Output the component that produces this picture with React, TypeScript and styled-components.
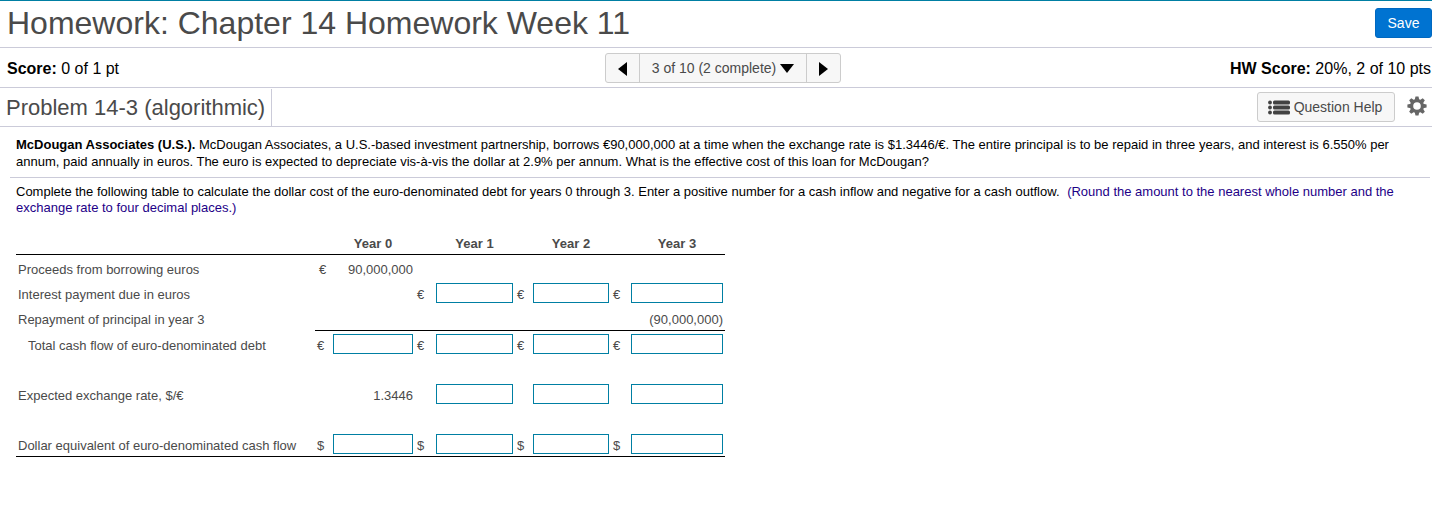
import React from "react";
import styled, { createGlobalStyle } from "styled-components";

const GlobalStyle = createGlobalStyle`
  * { box-sizing: border-box; }
  body {
    margin: 0;
    background: #fff;
    color: #000;
    font-family: "Liberation Sans", Arial, Helvetica, sans-serif;
    font-size: 13px;
  }
  button, input { font-family: inherit; }
`;

const line = "#cbcbd9";
const teal = "#007fa3";
const gray = "#4a4a4a";

const Header = styled.header`
  display: flex;
  align-items: center;
  justify-content: space-between;
  height: 48px;
  padding: 0 0 2px 7px;
  border-top: 1px solid ${teal};
  border-bottom: 1px solid ${line};
`;

const Title = styled.h1`
  margin: 0;
  font-size: 32px;
  line-height: 42px;
  font-weight: 400;
  color: ${gray};
  white-space: nowrap;
`;

const SaveButton = styled.button`
  width: 57px;
  height: 30px;
  padding: 0;
  border: 1px solid #0068c0;
  border-radius: 3px;
  background: #0073d1;
  color: #fff;
  font-size: 14px;
`;

const ScoreBar = styled.div`
  display: grid;
  grid-template-columns: 1fr auto 1fr;
  align-items: center;
  height: 40px;
  border-bottom: 1px solid ${line};
  font-size: 16px;
  white-space: nowrap;
`;

const Score = styled.div<{ $end?: boolean }>`
  padding: 2px 1px 0 7px;
  text-align: ${(p) => (p.$end ? "right" : "left")};
`;

const Pager = styled.nav`
  display: flex;
  height: 30px;
  margin-left: 14px;
  border: 1px solid #ccc;
  border-radius: 3px;
  background: #f7f7f7;
`;

const PagerButton = styled.button<{ $wide?: boolean }>`
  display: flex;
  align-items: center;
  justify-content: center;
  gap: 4px;
  width: ${(p) => (p.$wide ? 168 : 33)}px;
  padding: 0;
  border: solid #ccc;
  border-width: ${(p) => (p.$wide ? "0 1px" : "0")};
  background: transparent;
  color: ${gray};
  font-size: 14px;

  svg {
    margin-top: 2px;
  }
`;

const ProblemBar = styled.div`
  display: flex;
  align-items: center;
  justify-content: space-between;
  height: 39px;
  border-bottom: 1px solid ${line};
`;

const ProblemTitle = styled.h2`
  margin: 0;
  padding: 1px 6px 0 6px;
  border-right: 1px solid ${line};
  font-size: 22px;
  line-height: 36px;
  font-weight: 400;
  color: ${gray};
  white-space: nowrap;
`;

const Tools = styled.div`
  display: flex;
  align-items: center;
  gap: 12px;
  padding-right: 5px;
`;

const HelpButton = styled.button`
  display: flex;
  align-items: center;
  justify-content: center;
  gap: 4px;
  width: 138px;
  height: 30px;
  padding: 0 2px 0 0;
  border: 1px solid #ccc;
  border-radius: 3px;
  background: #f7f7f7;
  color: ${gray};
  font-size: 14px;
`;

const IconButton = styled.button`
  display: flex;
  padding: 0 0 2px;
  border: 0;
  background: transparent;
`;

const Problem = styled.main`
  padding: 9px 2px 0 10px;
`;

const Statement = styled.p`
  margin: 0;
  padding: 0 6px 7px;
  border-bottom: 1px solid ${line};
  line-height: 17px;
`;

const Instruction = styled.p`
  margin: 0;
  padding: 6px 6px 0;
  line-height: 16px;
`;

const Hint = styled.span`
  margin-left: 4px;
  color: #1d0087;
`;

const Worksheet = styled.table`
  width: 709px;
  margin: 16px 0 0 6px;
  table-layout: fixed;
  border-collapse: separate;
  border-spacing: 0;
  color: ${gray};
`;

const Col = styled.col<{ $w: number }>`
  width: ${(p) => p.$w}px;
`;

const HeadCell = styled.th`
  height: 23px;
  padding: 0;
  border-bottom: 1px solid #000;
  font-weight: 700;
`;

const Row = styled.tr<{ $rule?: "all" | "values" }>`
  height: ${(p) => (p.$rule ? 26 : 25)}px;

  > * {
    line-height: 20px;
    border-bottom: ${(p) => (p.$rule ? "1px solid #000" : "0")};
  }

  > th {
    border-bottom: ${(p) => (p.$rule === "all" ? "1px solid #000" : "0")};
  }
`;

const Gap = styled.tr`
  height: 25px;
`;

const Label = styled.th<{ $indent?: boolean }>`
  padding: 4px 2px 0 ${(p) => (p.$indent ? 12 : 2)}px;
  font-weight: 400;
  text-align: left;
  white-space: nowrap;
`;

const Currency = styled.td<{ $inset?: boolean }>`
  padding: 4px 0 0 ${(p) => (p.$inset ? 4 : 2)}px;
`;

const Amount = styled.td`
  padding: 4px 2px 0;
  text-align: right;
  white-space: nowrap;
`;

const AnswerCell = styled.td`
  padding: 0 2px;
`;

const Answer = styled.input`
  display: block;
  width: 100%;
  height: 20px;
  margin-top: 1px;
  padding: 0 3px;
  border: 1px solid ${teal};
  border-radius: 0;
  background: #fff;
  font-size: 13px;
  text-align: right;
`;

type Entry = { cur?: string; text?: string; input?: boolean };
type Line = { label: string; indent?: boolean; rule?: "all" | "values"; gap?: boolean; cells: Entry[] };

const ask = (cur?: string): Entry => ({ cur, input: true });

const lines: Line[] = [
  { label: "Proceeds from borrowing euros", cells: [{ cur: "€", text: "90,000,000" }, {}, {}, {}] },
  { label: "Interest payment due in euros", cells: [{}, ask("€"), ask("€"), ask("€")] },
  { label: "Repayment of principal in year 3", rule: "values", cells: [{}, {}, {}, { text: "(90,000,000)" }] },
  { label: "Total cash flow of euro-denominated debt", indent: true, cells: [ask("€"), ask("€"), ask("€"), ask("€")] },
  { label: "Expected exchange rate, $/€", gap: true, cells: [{ text: "1.3446" }, ask(), ask(), ask()] },
  {
    label: "Dollar equivalent of euro-denominated cash flow",
    gap: true,
    rule: "all",
    cells: [ask("$"), ask("$"), ask("$"), ask("$")],
  },
];

const columns = [299, 16, 84, 19, 81, 16, 80, 18, 96];

const Triangle = ({ d, w, h }: { d: string; w: number; h: number }) => (
  <svg width={w} height={h} viewBox={`0 0 ${w} ${h}`} aria-hidden="true">
    <path d={d} fill="#000" />
  </svg>
);

const ListIcon = () => (
  <svg width="22" height="15" viewBox="0 0 22 15" fill="#424242" aria-hidden="true">
    {[0, 5, 10].map((y) => (
      <g key={y}>
        <circle cx="2" cy={y + 2.5} r="1.9" />
        <rect x="5" y={y + 0.5} width="17" height="4" rx="1.5" />
      </g>
    ))}
  </svg>
);

const GearIcon = () => (
  <svg width="20" height="20" viewBox="-10 -10 20 20" aria-hidden="true">
    <g fill="#666">
      {[0, 45, 90, 135, 180, 225, 270, 315].map((a) => (
        <path key={a} d="M-2.3 -6L-1.5 -9.6H1.5L2.3 -6Z" transform={`rotate(${a})`} />
      ))}
    </g>
    <circle r="5.4" fill="none" stroke="#666" strokeWidth="3.2" />
  </svg>
);

export default function App() {
  return (
    <>
      <GlobalStyle />
      <Header>
        <Title>Homework: Chapter 14 Homework Week 11</Title>
        <SaveButton type="button">Save</SaveButton>
      </Header>
      <ScoreBar>
        <Score>
          <b>Score:</b> 0 of 1 pt
        </Score>
        <Pager aria-label="Questions">
          <PagerButton type="button" aria-label="Previous question">
            <Triangle w={9} h={14} d="M9 0V14L0 7Z" />
          </PagerButton>
          <PagerButton type="button" $wide>
            3 of 10 (2 complete)
            <Triangle w={14} h={9} d="M0 0H14L7 9Z" />
          </PagerButton>
          <PagerButton type="button" aria-label="Next question">
            <Triangle w={9} h={14} d="M0 0V14L9 7Z" />
          </PagerButton>
        </Pager>
        <Score $end>
          <b>HW Score:</b> 20%, 2 of 10 pts
        </Score>
      </ScoreBar>
      <ProblemBar>
        <ProblemTitle>Problem 14-3 (algorithmic)</ProblemTitle>
        <Tools>
          <HelpButton type="button">
            <ListIcon />
            Question Help
          </HelpButton>
          <IconButton type="button" aria-label="Settings">
            <GearIcon />
          </IconButton>
        </Tools>
      </ProblemBar>
      <Problem>
        <Statement>
          <b>McDougan Associates (U.S.).</b> McDougan Associates, a U.S.-based investment partnership, borrows
          €90,000,000 at a time when the exchange rate is $1.3446/€. The entire principal is to be repaid in three
          years, and interest is 6.550% per annum, paid annually in euros. The euro is expected to depreciate
          vis-à-vis the dollar at 2.9% per annum. What is the effective cost of this loan for McDougan?
        </Statement>
        <Instruction>
          Complete the following table to calculate the dollar cost of the euro-denominated debt for years 0 through
          3. Enter a positive number for a cash inflow and negative for a cash outflow.{" "}
          <Hint>
            (Round the amount to the nearest whole number and the exchange rate to four decimal places.)
          </Hint>
        </Instruction>
        <Worksheet>
          <colgroup>
            {columns.map((w, i) => (
              <Col key={i} $w={w} />
            ))}
          </colgroup>
          <thead>
            <tr>
              <HeadCell as="td" />
              {[0, 1, 2, 3].map((y) => (
                <React.Fragment key={y}>
                  <HeadCell as="td" />
                  <HeadCell scope="col">Year {y}</HeadCell>
                </React.Fragment>
              ))}
            </tr>
          </thead>
          <tbody>
            {lines.map((l) => (
              <React.Fragment key={l.label}>
                {l.gap && (
                  <Gap>
                    <td colSpan={9} />
                  </Gap>
                )}
                <Row $rule={l.rule}>
                  <Label scope="row" $indent={l.indent}>
                    {l.label}
                  </Label>
                  {l.cells.map((c, i) => (
                    <React.Fragment key={i}>
                      <Currency $inset={!c.input}>{c.cur}</Currency>
                      {c.input ? (
                        <AnswerCell>
                          <Answer type="text" aria-label={`${l.label}, year ${i}`} />
                        </AnswerCell>
                      ) : (
                        <Amount>{c.text}</Amount>
                      )}
                    </React.Fragment>
                  ))}
                </Row>
              </React.Fragment>
            ))}
          </tbody>
        </Worksheet>
      </Problem>
    </>
  );
}
